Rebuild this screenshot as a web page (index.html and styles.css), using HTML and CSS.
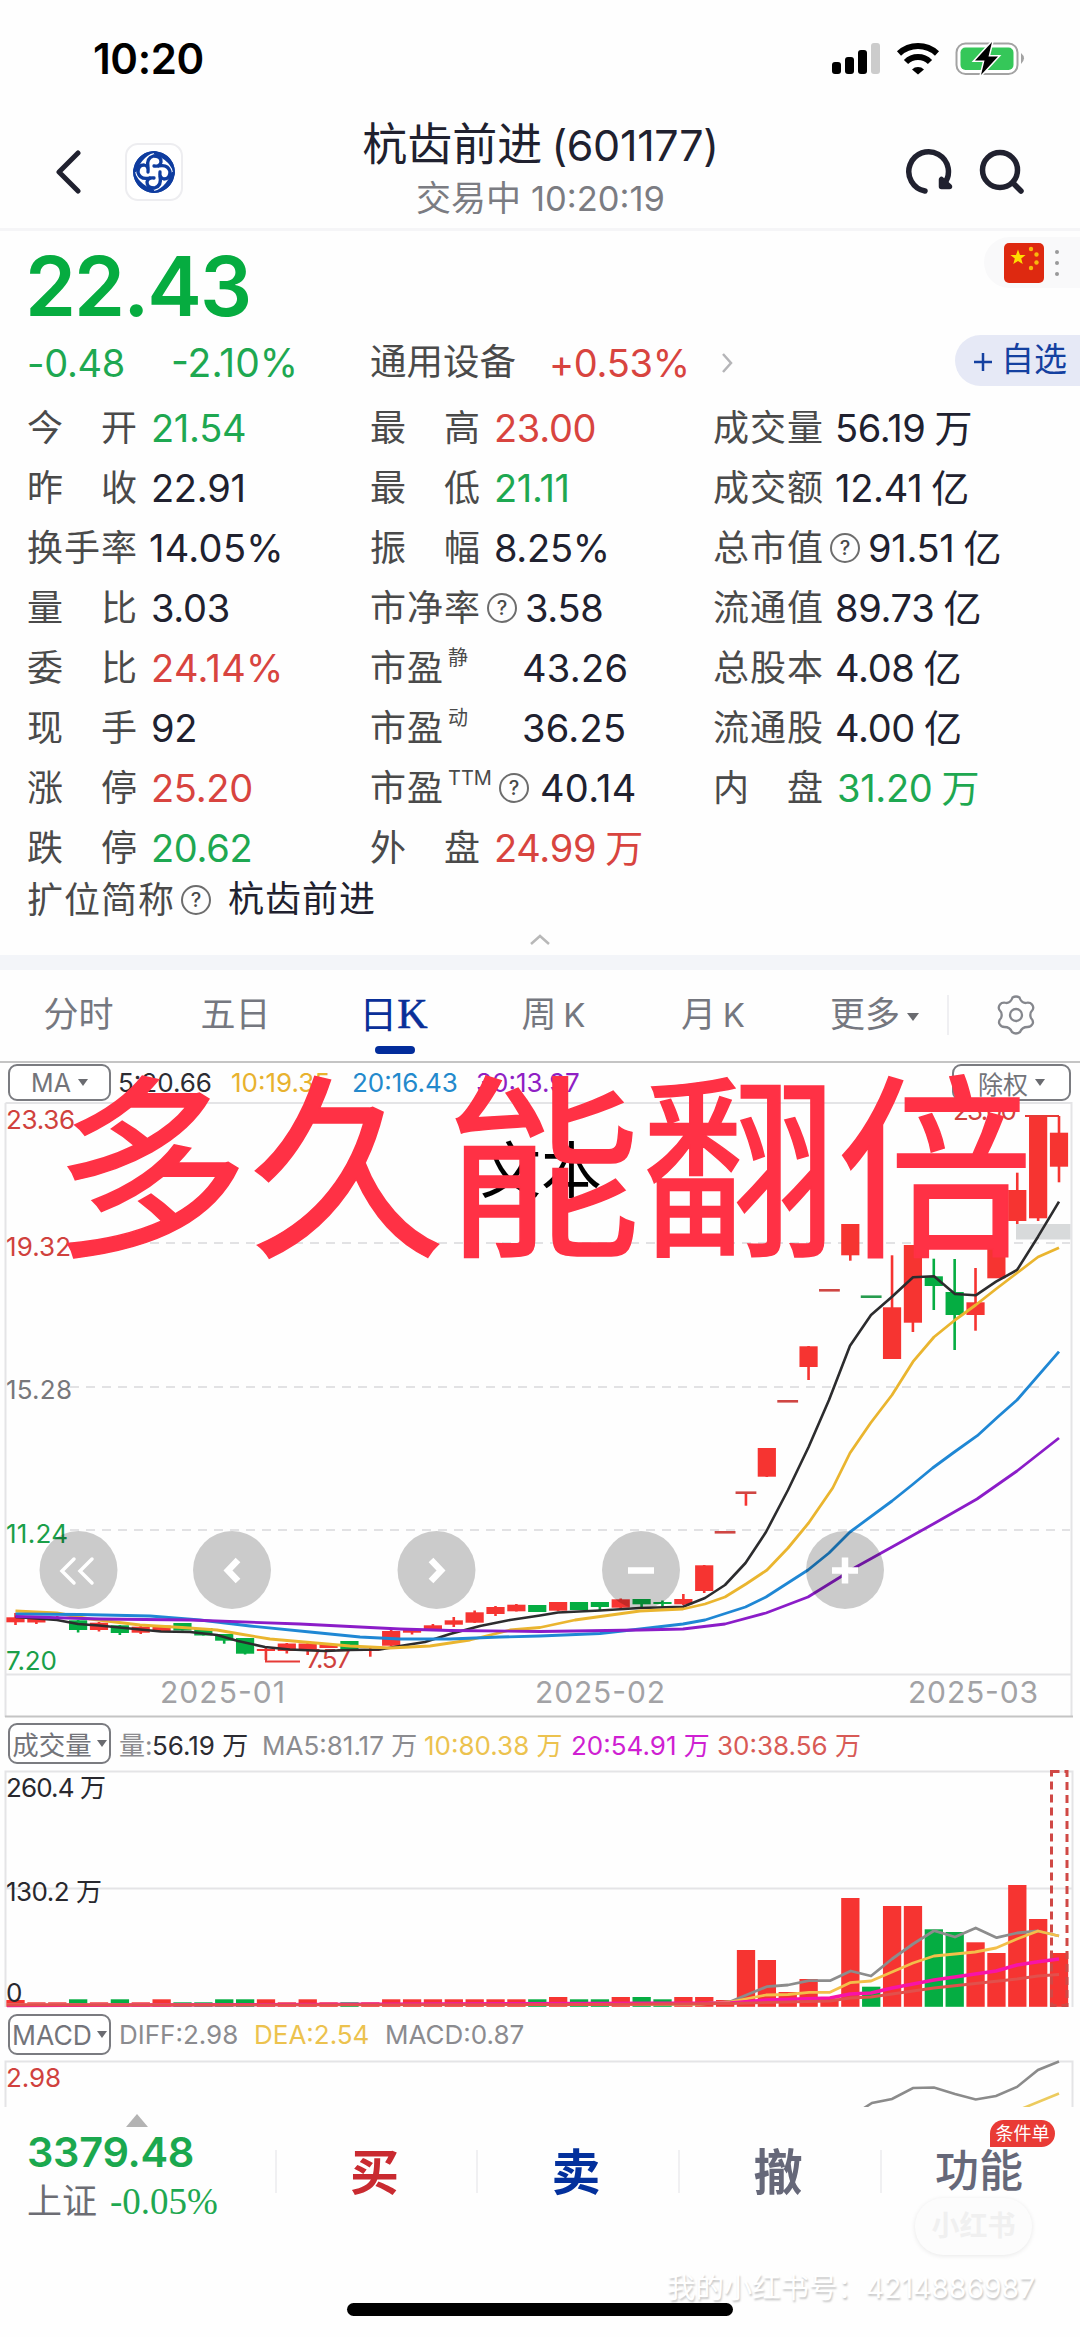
FILE: index.html
```html
<!DOCTYPE html>
<html lang="zh-CN">
<head>
<meta charset="utf-8">
<title>杭齿前进 (601177)</title>
<link rel="stylesheet" href="styles.css">
</head>
<body>
<div class="app">
  <div class="status">
    <span class="clock">10:20</span>
    <svg class="status-icons" viewBox="830 40 196 38" width="196" height="38">
      <rect x="832" y="62" width="9" height="12" rx="3"/>
      <rect x="845" y="57" width="9" height="17" rx="3"/>
      <rect x="858" y="50" width="9" height="24" rx="3"/>
      <rect x="871" y="43" width="9" height="31" rx="3" fill="#ccc"/>
      <path d="M899 53.5a28 28 0 0 1 38 0" fill="none" stroke="#000" stroke-width="6"/>
      <path d="M906 62a17 17 0 0 1 24 0" fill="none" stroke="#000" stroke-width="6"/>
      <path d="M912 69.500a8.500 8.500 0 0 1 12 0l-6 5z"/>
      <rect x="956.500" y="43.500" width="61" height="30.500" rx="9" fill="#fff" stroke="#a3a3a3" stroke-width="2"/>
      <rect x="960.500" y="47.500" width="53" height="22.500" rx="5" fill="#35c759"/>
      <path d="M1021 53q6 5 0 11z" fill="#a3a3a3"/>
      <path d="M992 42l-17 18.500h9.500l-3.500 14.500 17-18.500h-9.500z" stroke="#fff" stroke-width="3" paint-order="stroke"/>
    </svg>
  </div>

  <header class="header">
    <svg class="back" viewBox="0 0 28 44" width="28" height="44"><path d="M23 3L4 22l19 19"/></svg>
    <div class="logo">
      <svg viewBox="-21 -21 42 42" width="42" height="42">
        <defs>
          <g id="swirl">
            <path d="M-20.500 0A20.500 20.500 0 0 1 4 -20.500Q-12 -17 -17.500 0z" fill="#0e3c9f"/>
            <path d="M-6 -4.500Q-8 -14 -.5 -16Q7 -16 7 -10Q6 -5 0 -6" fill="none" stroke="#0e3c9f" stroke-width="3.300" stroke-linecap="round"/>
          </g>
        </defs>
        <circle r="19.700" fill="none" stroke="#0e3c9f" stroke-width="2"/>
        <use href="#swirl"/><use href="#swirl" transform="rotate(90)"/><use href="#swirl" transform="rotate(180)"/><use href="#swirl" transform="rotate(270)"/>
      </svg>
    </div>
    <div class="title">
      <h1>杭齿前进<span>(601177)</span></h1>
      <p>交易中 <span>10:20:19</span></p>
    </div>
    <svg class="tools" viewBox="904 147 122 50" width="122" height="50">
      <path d="M925 191A19.800 19.800 0 1 1 944 184" />
      <path d="M941.500 179.500v7h8z"/>
      <circle cx="1000" cy="170" r="17.500"/>
      <path d="M1013 183l8 8"/>
    </svg>
  </header>

  <section class="quote">
    <div class="price-row">
      <strong class="price">22.43</strong>
      <div class="market">
        <svg viewBox="0 0 40 40" width="40" height="40">
          <rect width="40" height="40" rx="5" fill="#de2910"/>
          <path d="M14 6.500l2 5.400 5.600.2-4.400 3.500 1.500 5.400-4.700-3.100-4.700 3.100 1.500-5.400-4.400-3.500 5.600-.2z" fill="#ffde00"/>
          <g fill="#f9b90c"><circle cx="27" cy="6" r="2.200"/><circle cx="32.500" cy="11.500" r="2.200"/><circle cx="32.500" cy="19.500" r="2.200"/><circle cx="27" cy="25" r="2.200"/></g>
        </svg>
        <i class="dots"></i>
      </div>
    </div>
    <div class="change-row">
      <span class="num green chg">-0.48</span>
      <span class="num green pct">-2.10%</span>
      <span class="sector">通用设备</span>
      <span class="num red sector-pct">+0.53%</span>
      <svg class="chev" viewBox="0 0 14 22" width="14" height="22"><path d="M3 2l8 9-8 9"/></svg>
      <span class="add"><svg viewBox="0 0 18 18" width="18" height="18"><path d="M9 0v18M0 9h18"/></svg><span>自选</span></span>
    </div>

    <div class="stats">
      <div><span class="lb two">今 开</span><b class="num green">21.54</b></div>
      <div><span class="lb two">最 高</span><b class="num red">23.00</b></div>
      <div><span class="lb">成交量</span><b class="num">56.19<em>万</em></b></div>

      <div><span class="lb two">昨 收</span><b class="num">22.91</b></div>
      <div><span class="lb two">最 低</span><b class="num green">21.11</b></div>
      <div><span class="lb">成交额</span><b class="num">12.41<em class="yi">亿</em></b></div>

      <div><span class="lb">换手率</span><b class="num wide">14.05%</b></div>
      <div><span class="lb two">振 幅</span><b class="num">8.25%</b></div>
      <div><span class="lb">总市值</span><i class="q">?</i><b class="num">91.51<em class="yi">亿</em></b></div>

      <div><span class="lb two">量 比</span><b class="num">3.03</b></div>
      <div><span class="lb">市净率</span><i class="q">?</i><b class="num">3.58</b></div>
      <div><span class="lb">流通值</span><b class="num">89.73<em class="yi">亿</em></b></div>

      <div><span class="lb two">委 比</span><b class="num red wide">24.14%</b></div>
      <div><span class="lb pe">市盈<sup>静</sup></span><b class="num wide">43.26</b></div>
      <div><span class="lb">总股本</span><b class="num">4.08<em class="yi">亿</em></b></div>

      <div><span class="lb two">现 手</span><b class="num">92</b></div>
      <div><span class="lb pe">市盈<sup>动</sup></span><b class="num wide">36.25</b></div>
      <div><span class="lb">流通股</span><b class="num">4.00<em class="yi">亿</em></b></div>

      <div><span class="lb two">涨 停</span><b class="num red">25.20</b></div>
      <div><span class="lb ttm">市盈<sup>TTM</sup></span><i class="q">?</i><b class="num wide">40.14</b></div>
      <div><span class="lb two">内 盘</span><b class="num green">31.20<em>万</em></b></div>

      <div><span class="lb two">跌 停</span><b class="num green">20.62</b></div>
      <div><span class="lb two">外 盘</span><b class="num red">24.99<em>万</em></b></div>
      <div></div>
    </div>
    <div class="alias"><span class="lb">扩位简称</span><i class="q">?</i><span class="alias-name">杭齿前进</span></div>
    <svg class="collapse" viewBox="0 0 22 12" width="22" height="12"><path d="M2 10l9-8 9 8"/></svg>
  </section>

  <nav class="tabs">
    <span>分时</span><span>五日</span><span class="on">日<i>K</i></span><span>周 <i>K</i></span><span class="month">月 <i>K</i></span>
    <span class="more">更多<i class="tri"></i></span>
    <svg class="gear" viewBox="-20 -20 40 40" width="40" height="40">
      <path d="M-3.500 -17.500Q0 -19.500 3.500 -17.500Q5 -12.500 9.500 -12Q14 -13 16 -10.500Q18 -8 16.800 -5.500Q13 -1.500 15 3Q18 6.500 16.500 9Q15 12 11.500 12Q6 12 4 17Q0 20 -4 17Q-6 12 -11.500 12Q-15 12 -16.500 9Q-18 6.500 -15 3Q-13 -1.500 -16.800 -5.500Q-18 -8 -16 -10.500Q-14 -13 -9.500 -12Q-5 -12.500 -3.500 -17.500z"/>
      <circle r="6"/>
    </svg>
  </nav>

  <section class="kline">
    <div class="legend ma">
      <span class="pick">MA<i class="tri"></i></span>
      <span class="c-dark">5:20.66</span><span class="c-gold">10:19.35</span><span class="c-blue">20:16.43</span><span class="c-purple">30:13.97</span>
      <span class="pick right">除权<i class="tri"></i></span>
    </div>
    <svg class="plot" id="kline" viewBox="0 1102 1080 616" width="1080" height="616">
      <g class="frame"><path d="M5.500 1103H1071.500V1717M5.500 1103V1717M5.500 1674.500H1071.500"/><path d="M5 1716.500H1073" class="strong"/></g>
      <g class="dash"><path d="M70 1243H1070M70 1387H1070M70 1530H1070"/></g>
      <g class="axis">
        <text x="6" y="1129" textLength="69" class="f-red">23.36</text>
        <text x="6" y="1256" textLength="65" class="f-red">19.32</text>
        <text x="6" y="1399" textLength="66" class="f-gray">15.28</text>
        <text x="6" y="1543" textLength="62" class="f-green">11.24</text>
        <text x="6" y="1670" textLength="51" class="f-green">7.20</text>
        <text x="953" y="1120" textLength="64" class="f-red">23.00</text>
      </g>
      <g class="dates">
        <text x="160" y="1703" textLength="125">2025-01</text>
        <text x="535" y="1703" textLength="130">2025-02</text>
        <text x="908" y="1703" textLength="130">2025-03</text>
      </g>
      <rect x="1016" y="1224" width="54.500" height="15.500" fill="#d8dadb"/>
      <g id="candles"></g>
      <path d="M266 1651V1661.500H300M1025 1116H1059" fill="none" stroke="#e63a36" stroke-width="2"/>
      <g class="axis"><text x="306" y="1668" textLength="45" class="f-red">7.57</text></g>
      <g id="ma"></g>
      <g class="knobs">
        <circle cx="78.500" cy="1570" r="39"/><circle cx="232" cy="1570" r="39"/><circle cx="436.500" cy="1570" r="39"/><circle cx="641" cy="1570" r="39"/><circle cx="845" cy="1570" r="39"/>
        <g class="thin"><path d="M74 1559l-12 12 12 12M92 1559l-12 12 12 12"/></g>
        <path d="M238 1560l-10 10.500 10 10.500M431 1560l10 10.500-10 10.500M628 1570.500h26M832 1570.500h26M845 1557.500v26"/>
      </g>
    </svg>
    <div class="placeholder">文本</div>
    <div class="headline">多久能翻倍</div>
  </section>

  <section class="volume">
    <div class="legend vol">
      <span class="pick">成交量<i class="tri"></i></span>
      <span class="c-gray">量:</span><span class="c-dark">56.19 万</span><span class="c-gray">MA5:81.17 万</span><span class="c-gold2">10:80.38 万</span><span class="c-mag">20:54.91 万</span><span class="c-red">30:38.56 万</span>
    </div>
    <svg class="plot" viewBox="0 1768 1080 240" width="1080" height="240">
      <g class="frame"><path d="M5.500 2007V1771.500H1072.500V2007M5.500 1888.500H1072.500"/></g>
      <g id="bars"></g>
      <rect x="1051.500" y="1771.500" width="15.500" height="234" fill="none" stroke="#d04845" stroke-width="3" stroke-dasharray="8 5"/>
      <g id="volma"></g>
      <g class="axis">
        <text x="6" y="1796.500" textLength="100" class="f-dark">260.4 万</text>
        <text x="6" y="1900.500" textLength="96" class="f-dark">130.2 万</text>
        <text x="6" y="2002" textLength="15" class="f-dark">0</text>
      </g>
    </svg>
  </section>

  <section class="macd">
    <div class="legend md">
      <span class="pick">MACD<i class="tri"></i></span>
      <span class="c-gray">DIFF:2.98</span><span class="c-gold2">DEA:2.54</span><span class="c-gray">MACD:0.87</span>
    </div>
    <svg class="plot" viewBox="0 2058 1080 49" width="1080" height="49">
      <g class="frame"><path d="M5.500 2110V2061.500H1072.500V2110"/></g>
      <path d="M864 2108L872 2103 892 2099 913 2088 934 2087.500 955 2094 975.700 2099.500 996 2096 1017 2087 1038 2070 1059 2061.500" fill="none" stroke="#8b8b8b" stroke-width="2.600"/>
      <path d="M1021 2109L1059 2093.500" fill="none" stroke="#eccb5e" stroke-width="2.600"/>
      <g class="axis"><text x="6" y="2087" textLength="55" class="f-red">2.98</text></g>
    </svg>
  </section>

  <footer class="bottom">
    <div class="index">
      <i class="up"></i>
      <strong>3379.48</strong>
      <p>上证<span>-0.05%</span></p>
    </div>
    <span class="act buy">买</span>
    <span class="act sell">卖</span>
    <span class="act">撤</span>
    <span class="act fn">功能<i class="badge">条件单</i></span>
  </footer>
  <div class="brand">小红书</div>
  <div class="mark">我的小红书号：4214886987</div>
  <div class="home"></div>
</div>
<script src="script.js"></script>
</body>
</html>
```
FILE: styles.css
```css
* { box-sizing: border-box; }
body { margin: 0; background: #fefefe; font-family: Inter, "Noto Sans CJK SC", sans-serif; color: #20212f; }
h1, p { margin: 0; font-weight: 400; }
i, em { font-style: normal; }
svg { display: block; }
.app { position: relative; width: 1080px; height: 2337px; overflow: hidden; background: #fefefe; }

.status { height: 115px; display: flex; justify-content: space-between; padding: 40px 54px 0 93px; }
.clock { font-size: 42px; line-height: 38px; font-weight: 600; color: #000; letter-spacing: -.4px; }

.header { height: 116px; border-bottom: 3px solid #f5f5f7; display: flex; align-items: flex-start; padding: 0 54px 0 55px; }
.back { margin-top: 35px; fill: none; stroke: #20212f; stroke-width: 5; stroke-linecap: round; stroke-linejoin: round; }
.logo { width: 58px; height: 58px; margin: 28px 0 0 42px; border: 2px solid #ededf0; border-radius: 13px; background: #fff; display: grid; place-items: center; }
.title { flex: 1; text-align: center; padding-right: 6px; }
.title h1 { font-size: 45px; line-height: 60px; white-space: nowrap; color: #20212f; }
.title h1 span { font-size: 43px; letter-spacing: -.3px; margin-left: 9px; }
.title p { font-size: 35px; line-height: 46px; color: #7b7c82; }
.title p span { font-size: 34.500px; }
.tools { margin-top: 32px; fill: none; stroke: #20212f; stroke-width: 5.500; stroke-linecap: round; stroke-linejoin: round; }

.quote { height: 724px; position: relative; }
.price-row { height: 98px; display: flex; justify-content: space-between; }
.price { font-size: 82px; line-height: 98px; padding: 7px 0 0 25px; color: #06ac40; font-weight: 600; letter-spacing: -2px; }
.market { width: 96px; height: 51px; margin-top: 6px; border-radius: 26px 0 0 26px; background: #f9f9fa; display: flex; align-items: center; padding-left: 20px; gap: 11px; }
.dots { width: 4px; height: 4px; border-radius: 2px; background: #999; box-shadow: 0 -11px #999, 0 11px #999; }
.change-row { height: 68px; display: flex; align-items: center; padding-left: 27px; }
.num { font-size: 38px; font-weight: 400; letter-spacing: -.3px; white-space: nowrap; line-height: 60px; }
.num.wide { letter-spacing: .3px; }
.num em { font-size: 38px; margin-left: 9px; line-height: 1; }
.num em.yi { margin-left: 9px; }
.green, .num.green { color: #1ea851; }
.red, .num.red { color: #d8443f; }
.chg { width: 144px; }
.num.pct { width: 199px; font-size: 39px; letter-spacing: 0; }
.sector { font-size: 36.500px; color: #4a4a4a; width: 179px; line-height: 60px; margin-top: -3px; }
.sector-pct { width: 171px; }
.chev { fill: none; stroke: #b5b5b8; stroke-width: 2.500; }
.add { margin-left: auto; width: 125px; height: 51px; margin-bottom: 6px; border-radius: 26px 0 0 26px; background: #e6e9f6; color: #1440a0; font-size: 33px; display: flex; align-items: center; gap: 9px; padding-left: 19px; }
.add span { line-height: 50px; margin-top: -3px; }
.add svg { stroke: #1440a0; stroke-width: 2.500; margin-top: 3px; }

.stats { display: grid; grid-template-columns: 343px 343px 1fr; grid-auto-rows: 60px; padding-left: 27px; padding-top: 1px; }
.stats > div, .alias { display: flex; align-items: center; }
.lb { font-size: 36px; letter-spacing: 1px; color: #4a4a4a; white-space: nowrap; width: 122px; line-height: 60px; }
.lb.two { width: 110px; margin-right: 14px; letter-spacing: 0; text-align-last: justify; }
.lb:has(+ .q) { width: 117px; }
.lb.pe { width: 152px; }
.lb.ttm:has(+ .q) { width: 129px; }
.lb.ttm + .q { margin-right: 11px; }
sup { font-size: 20px; line-height: 0; vertical-align: 16px; letter-spacing: 0; margin-left: 4px; }
.q { flex: none; width: 30px; height: 30px; border: 2px solid #6d6d6d; border-radius: 50%; font-size: 20px; line-height: 26px; text-align: center; font-weight: 500; color: #4a4a4a; margin-right: 8px; }
.alias { height: 44px; padding-left: 27px; }
.alias .lb:has(+ .q) { width: 154px; }
.alias-name { font-size: 36px; letter-spacing: 1px; margin-left: 9px; line-height: 60px; margin-top: -2px; }
.collapse { position: absolute; left: 529px; top: 703px; fill: none; stroke: #b8b8b8; stroke-width: 2.500; }

.tabs { height: 106px; border-top: 15px solid #f3f5f9; display: grid; grid-template-columns: 157px 157px 159px 161px 154px 161px 1fr; align-items: center; padding-bottom: 2px; font-size: 35px; color: #75777f; }
.tabs span { text-align: center; height: 89px; line-height: 88px; white-space: nowrap; word-spacing: -3px; }
.tabs i { font-size: 33px; }
.tabs .month { padding-left: 4px; }
.tabs .on { color: #0a2f98; position: relative; font-weight: 400; font-size: 38px; }
.tabs .on i { font-family: "Liberation Serif", serif; font-size: 42px; font-weight: 400; -webkit-text-stroke: .6px #0a2f98; }
.tabs .on::after { content: ""; position: absolute; left: 61px; top: 76px; width: 40px; height: 8px; border-radius: 4px; background: #022c9b; }
.tri { display: inline-block; width: 0; height: 0; border: 5px solid transparent; border-top: 7px solid #6a6b70; border-bottom: 0; margin-left: 7px; vertical-align: middle; }
.tabs .more { text-align: right; padding-right: 28px; height: 40px; line-height: 38px; border-right: 2px solid #efeff2; }
.tabs .more .tri { border-width: 8px 6px 0; }
.gear { margin-left: 47px; fill: none; stroke: #85878d; stroke-width: 2.300; }

.kline { position: relative; }
.legend { display: grid; font-size: 26px; white-space: nowrap; align-items: center; padding-left: 8px; }
.pick { width: 103px; height: 37px; border: 2px solid #7a7b80; border-radius: 9px; color: #73747a; display: flex; align-items: center; justify-content: center; background: #fff; font-size: 25px; }
.legend.ma { height: 41px; border-top: 2px solid #c4c4c4; grid-template-columns: 110px 113px 121px 124px 476px 120px; }
.pick.right { width: 119px; }
.legend.vol { height: 50px; grid-template-columns: 111px 33px 110px 162px 147px 146px 150px; }
.legend.md { height: 50px; grid-template-columns: 111px 135px 131px 150px; padding-top: 3px; }
.vol .pick, .md .pick { height: 41px; font-size: 26.500px; }
.vol .pick .tri, .md .pick .tri { margin-left: 5px; }
.c-dark { color: #2c2c32; } .c-gold { color: #e8b22e; } .c-blue { color: #2389cc; } .c-purple { color: #8f1fc4; }
.c-gray { color: #8b8b8f; } .c-gold2 { color: #ecc24e; } .c-mag { color: #cf1fd2; } .c-red { color: #d85a56; }

.frame { fill: none; stroke: #e4e4e6; stroke-width: 2; }
.frame .strong { stroke: #c4c4c4; }
.dash { stroke: #e2e2e4; stroke-width: 2; stroke-dasharray: 9 7; fill: none; }
.axis text { font-size: 26px; }
.dates text { font-size: 30px; fill: #a2a2a5; }
.f-red { fill: #d0413d; } .f-green { fill: #1a9f49; } .f-gray { fill: #77777b; } .f-dark { fill: #28282e; }
.knobs circle { fill: rgba(0, 0, 0, .2); }
.knobs path { fill: none; stroke: #fff; stroke-width: 6.500; }
.knobs .thin path { stroke-width: 3.500; stroke-linecap: round; }

.placeholder { position: absolute; left: 480px; top: 64px; font-size: 61px; line-height: 92px; color: #000; }
.headline { position: absolute; left: 53px; top: -1px; font-size: 196px; line-height: 220px; font-weight: 400; color: #ff3145; -webkit-text-stroke: 1.5px #ff3145; white-space: nowrap; }

.macd { margin-top: -3px; padding-top: 3px; }
.bottom { height: 110px; display: grid; grid-template-columns: 275px 201px 202px 202px 200px; }
.index { padding-left: 27px; }
.up { display: block; width: 0; margin: 7px 0 0 99px; border: 11px solid transparent; border-top: 0; border-bottom: 13px solid #b3b3b3; }
.index strong { display: block; font-size: 41.500px; line-height: 50px; font-weight: 600; color: #1ba84e; letter-spacing: -.3px; }
.index p { font-size: 35px; line-height: 48px; color: #6c6d74; white-space: nowrap; }
.index p span { font-family: "Liberation Serif", serif; font-size: 37px; color: #1ea851; margin-left: 13px; }
.act { position: relative; margin-top: 43px; height: 43px; border-left: 2px solid #f0f0f2; text-align: center; font-size: 49px; line-height: 45px; font-weight: 700; color: #666879; padding-right: 4px; }
.buy { color: #c92a30; } .sell { color: #03309c; }
.fn { font-size: 44px; font-weight: 500; line-height: 43px; }
.badge { position: absolute; right: 25px; top: -30px; width: 65px; height: 27px; border-radius: 14px 14px 14px 0; background: #e93b36; color: #fff; font-size: 18px; line-height: 27px; font-weight: 400; }
.brand { position: absolute; left: 915px; top: 2198px; width: 117px; height: 57px; border-radius: 28px; background: #fcfcfc; box-shadow: 0 1px 5px rgba(0, 0, 0, .09); color: #f0f0f0; font-size: 28px; line-height: 56px; font-weight: 700; text-align: center; }
.mark { position: absolute; left: 667px; top: 2268px; font-size: 28.400px; line-height: 40px; color: #fff; text-shadow: 1px 2px 2px rgba(0, 0, 0, .22); white-space: nowrap; }
.home { position: absolute; left: 347px; top: 2303px; width: 386px; height: 13px; border-radius: 7px; background: #000; }
```
FILE: script.js
```javascript
const NS = 'http://www.w3.org/2000/svg';
const RED = '#f63431', GREEN = '#05ad42', PITCH = 20.87, X0 = 15.5;
const add = (id, tag, attrs) => {
  const el = document.createElementNS(NS, tag);
  for (const k in attrs) el.setAttribute(k, attrs[k]);
  document.getElementById(id).appendChild(el);
};

// colour, body top, body bottom, wick top, wick bottom
const candles = [
  ['r',1617.3,1622.3,1613,1625],['r',1618,1622.5,1617,1624],['r',1618,1619,1616,1619],['g',1620.3,1630,1620,1632.5],
  ['r',1622.7,1630,1622,1631.5],['g',1625.3,1633,1625,1635],['r',1626.7,1632.7,1626,1634],['r',1625.5,1632,1625,1632],
  ['g',1623,1630.5,1623,1630.5],['g',1628,1635.5,1628,1635.5],['g',1634,1640.7,1634,1643.7],['g',1638,1653.7,1638,1654.5],
  ['r',1649,1651,1646,1660],['r',1643.5,1651,1643,1653.5],['r',1643.5,1649,1643,1655],['r',1644,1648,1644,1648],
  ['g',1641,1649,1641,1649],['r',1649,1651,1648,1656.7],['r',1631,1645.7,1630,1646],['r',1630,1632.7,1630,1634.5],
  ['r',1625.3,1630,1624,1630],['r',1620.3,1624.7,1617,1627],['r',1612.3,1622.7,1610.5,1623],['r',1607,1614,1606,1616],
  ['r',1604.7,1611.3,1604,1611.5],['g',1605,1612,1605,1612],['r',1602,1610.7,1602,1611],['g',1602,1610,1602,1610],
  ['g',1602,1607,1602,1610],['r',1599.3,1607.7,1598.5,1608],['g',1599,1604.3,1599,1608],['g',1602,1604,1600.5,1607],
  ['r',1599,1604.3,1594,1605],['r',1565.3,1591,1565,1593],['d',1532.3],['d',1492.7,0,1492,1505.7],
  ['r',1448,1476.7,1448,1477],['d',1401.3],['r',1346.3,1367,1346,1380],['d',1290.3],
  ['r',1224,1255.3,1224,1260.7],['e',1296.7],['r',1307.3,1359,1255.3,1359],['r',1245,1322.7,1245,1332],
  ['g',1276.3,1286,1258.7,1310],['g',1292,1315,1259,1350],['r',1302.3,1315,1268,1330.7],['r',1248,1278.3,1240,1278],
  ['r',1190,1221,1172.7,1224],['r',1116,1218.3,1116,1221],['r',1132.7,1166.7,1116,1182.3]
];
candles.forEach((c, i) => {
  const x = X0 + PITCH * i, flat = c[0] === 'd' || c[0] === 'e';
  const fill = c[0] === 'g' || c[0] === 'e' ? GREEN : RED;
  if (c[4]) add('candles', 'rect', { x: x - 1.3, y: c[3], width: 2.6, height: c[4] - c[3], fill });
  if (flat) add('candles', 'rect', { x: x - 10.4, y: c[1] - 1.3, width: 20.8, height: 2.6, fill: c[0] === 'd' ? '#cf4643' : '#279c4e' });
  else add('candles', 'rect', { x: x - 9.1, y: c[1], width: 18.2, height: c[2] - c[1], fill });
});

const line = (id, stroke, w, pts) => add(id, 'polyline', { points: pts, fill: 'none', stroke, 'stroke-width': w, 'stroke-linejoin': 'round' });
line('ma', '#2c2c2e', 2.6, '15.5,1617 57,1620 78,1624 99,1625.5 140,1629.5 161,1631.5 190,1632 217,1635 238,1641 265,1647 290,1649.5 325,1651 350,1650 380,1649.5 400,1646 425,1642 450,1634 480,1626 510,1620 540,1615.5 558,1612.5 600,1610.5 640,1608 683,1606.7 705,1598 725,1585 745.5,1563 766,1532 788,1490 808.6,1447 829,1400 850,1345.7 871,1315 892,1296.7 913,1277.3 934,1276.3 955,1294 975.7,1295.3 996,1281.7 1017,1270 1038,1236.7 1059,1201.7');
line('ma', '#eab52f', 2.8, '15.5,1611 57,1613 90,1619 140,1625 182,1627.5 217,1630 240,1634 270,1639 310,1642.5 350,1646 390,1648 430,1646 470,1640 510,1630 540,1627.5 575,1620 640,1611 683,1609 705,1604 725,1597 746,1584 767,1570 788,1548 808.6,1523 832.7,1488 850,1453 870.6,1423 892,1395 913,1361.7 934,1337 955,1320 975.7,1305 996,1289 1017,1273 1038,1257 1059,1247.7');
line('ma', '#1f87d4', 2.8, '15.5,1614 80,1614.5 150,1616 200,1620 250,1626 310,1632 360,1637 400,1639 450,1639 500,1637 540,1636 600,1633.5 640,1629 683,1624 705,1620 745.5,1607 766,1597 808,1570 829,1553 850,1532 892,1501 912,1485 932.6,1468 953,1453 977.3,1435.7 998,1416.7 1017,1400 1059,1351.7');
line('ma', '#8b1cc8', 2.8, '15.5,1616.5 100,1619 190,1620 300,1624 400,1629 450,1630.5 540,1631.5 640,1630 683,1629 725,1624 766,1613 808,1597 842,1576 856,1567 892,1547 935,1523 977,1499 1017,1471 1059,1438');

// fill of the day and the bar's top edge, in the plot's units
const r = RED, g = GREEN, S = 2002.3, M = 1999.3, T = 1997;
const volumes = [
  [r,2000],[r,S],[r,S],[g,M],[r,S],[g,M],[r,S],[r,M],[g,S],[g,S],[g,M],[g,M],[r,M],[r,S],[r,M],[r,S],[g,S],[r,S],
  [r,M],[r,M],[r,M],[r,M],[r,M],[r,M],[r,M],[g,M],[r,T],[g,M],[g,M],[r,T],[g,T],[g,M],[r,T],[r,T],[r,2000],
  [r,1950],[r,1960],[r,1992],[r,1979],[r,1998.5],[r,1898],[g,1986.7],[r,1906],[r,1906],[g,1929.3],[g,1932],
  [r,1942.3],[r,1953],[r,1885],[r,1919],[r,1953]
];
volumes.forEach(([fill, y], i) => add('bars', 'rect', { x: X0 + PITCH * i - 9.1, y, width: 18.3, height: 2006.8 - y, fill }));
line('volma', '#8c8c8c', 2.8, '7,2005 700,2004 730,2001.7 766.7,1986.7 788,1985 809,1980.7 830,1980.7 850.7,1971 871,1976 892,1959 913,1944 934,1930.7 955,1937 975.7,1928 996.7,1937.7 1017,1933 1038,1931 1059,1936');
line('volma', '#f3bf4a', 2.8, '7,2005 700,2004 730,2002 766,1995 788,1994.5 809,1992.3 830,1992.3 850,1982.7 871,1981 892,1972 913,1963 934,1956 955,1954 975,1952 996,1948 1017,1939 1038,1931 1059,1936');
line('volma', '#f714a8', 3.4, '7,2005.5 730,2003 766,2000 830,1998 850,1994 871,1993 892,1988 934,1980 996,1971 1017,1965 1038,1961.7 1059,1959');
line('volma', '#e2504c', 2.8, '7,2005 600,2004.5 730,2003.5 830,2001 850,1998 871,1997 934,1988 1017,1979 1038,1976 1059,1974.5');
```
